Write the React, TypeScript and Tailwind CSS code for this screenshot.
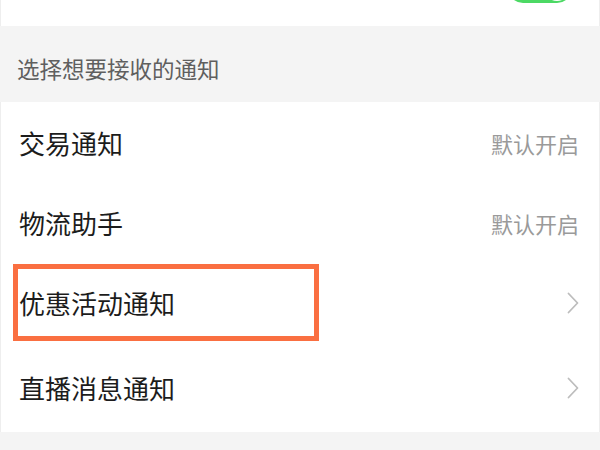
import React from 'react';

const font = { fontFamily: '"Noto Sans CJK SC", "Noto Sans", sans-serif' };

type Row = { label: string; hint?: string; h: string; boxed?: boolean };

const rows: Row[] = [
  { label: '交易通知', hint: '默认开启', h: 'h-[82px]' },
  { label: '物流助手', hint: '默认开启', h: 'h-[78px]' },
  { label: '优惠活动通知', h: 'h-[81px]', boxed: true },
  { label: '直播消息通知', h: 'h-[89px]' },
];

const Chevron: React.FC = () => (
  <svg width="12" height="22" viewBox="0 0 12 22" fill="none">
    <path d="M1.5 1.5 L10.5 11 L1.5 20.5" stroke="#bdbdbd" strokeWidth="1.8" strokeLinecap="round" strokeLinejoin="round" />
  </svg>
);

const App: React.FC = () => {
  return (
    <div className="w-[600px] h-[450px] overflow-hidden bg-[#f4f4f4] flex flex-col" style={font}>
      {/* Top row, only the bottom edge of the switch shows */}
      <div className="h-[26px] bg-white border-x border-[#eeeeee] flex justify-end pr-[27px] overflow-hidden">
        <div className="relative w-[64px] h-[30px] -mt-[27px] rounded-full bg-[#4cd964]">
          <span className="absolute right-[2px] top-[2px] w-[26px] h-[26px] rounded-full bg-white" />
        </div>
      </div>

      {/* Section header */}
      <div className="h-[76px] flex items-center px-[17px] pt-[10px] text-[22.5px] text-[#5f5f5f]">
        选择想要接收的通知
      </div>

      {/* List */}
      <div className="bg-white border-x border-[#eeeeee] flex flex-col">
        {rows.map((row) => (
          <div key={row.label} className={`${row.h} relative flex items-center justify-between pl-[18px] pr-[20px]`}>
            <span className="text-[26px] text-[#1c1c1c] leading-none">{row.label}</span>
            {row.hint ? (
              <span className="text-[22px] text-[#9a9a9a] leading-none">{row.hint}</span>
            ) : (
              <Chevron />
            )}
            {row.boxed && (
              <div className="absolute left-[12px] top-[2px] w-[306px] h-[77px] border-[5px] border-[#fa6f41]" />
            )}
          </div>
        ))}
      </div>
    </div>
  );
};

export default App;
